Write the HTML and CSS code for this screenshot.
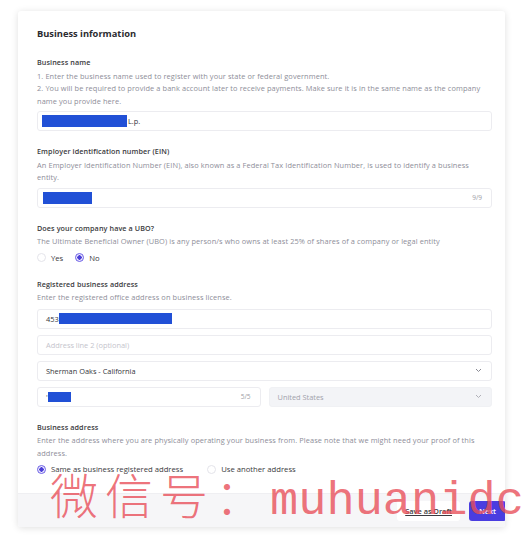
FILE: index.html
```html
<!DOCTYPE html>
<html>
  <head>
    <meta name="viewport" content="width=device-width, initial-scale=1">
    <link rel="stylesheet" href="styles.css">
  </head>

  <body>
    <div class="page">
      <div class="card">
        <div class="card-body">
          <h2 class="title">Business information</h2>

          <div class="field">
            <div class="label">Business name</div>
            <div class="hint">1. Enter the business name used to register with your state or federal government.</div>
            <div class="hint">2. You will be required to provide a bank account later to receive payments. Make sure it is in the same name as the company name you provide here.</div>
            <div class="input"><span class="redact redact-name"></span>L.p.</div>
          </div>

          <div class="field">
            <div class="label">Employer identification number (EIN)</div>
            <div class="hint">An Employer Identification Number (EIN), also known as a Federal Tax Identification Number, is used to identify a business entity.</div>
            <div class="input"><span class="redact redact-ein"></span><span class="count">9/9</span></div>
          </div>

          <div class="field">
            <div class="label">Does your company have a UBO?</div>
            <div class="hint">The Ultimate Beneficial Owner (UBO) is any person/s who owns at least 25% of shares of a company or legal entity</div>
            <div class="radios">
              <label class="radio"><span class="dot"></span>Yes</label>
              <label class="radio checked"><span class="dot"></span>No</label>
            </div>
          </div>

          <div class="field">
            <div class="label">Registered business address</div>
            <div class="hint">Enter the registered office address on business license.</div>
            <div class="stack">
              <div class="input">453<span class="redact redact-street"></span></div>
              <div class="input placeholder">Address line 2 (optional)</div>
              <div class="input select">Sherman Oaks - California
                <svg class="chev" width="7" height="5" viewBox="0 0 7 5"><path d="M1 1l2.5 2.5L6 1" fill="none" stroke="#8a8a94" stroke-width="1"/></svg>
              </div>
              <div class="row">
                <div class="input"><span class="tick">'</span><span class="redact redact-zip"></span><span class="count">5/5</span></div>
                <div class="input select disabled">United States
                  <svg class="chev" width="7" height="5" viewBox="0 0 7 5"><path d="M1 1l2.5 2.5L6 1" fill="none" stroke="#b0b0b8" stroke-width="1"/></svg>
                </div>
              </div>
            </div>
          </div>

          <div class="field last">
            <div class="label">Business address</div>
            <div class="hint">Enter the address where you are physically operating your business from. Please note that we might need your proof of this address.</div>
            <div class="radios">
              <label class="radio checked"><span class="dot"></span>Same as business registered address</label>
              <label class="radio wide"><span class="dot"></span>Use another address</label>
            </div>
          </div>
        </div>

        <div class="card-footer">
          <button class="btn-draft">Save as Draft</button>
          <button class="btn-next">Next</button>
        </div>
      </div>
    </div>

    <div class="watermark"><span class="wm-cjk">微信号：</span><span class="wm-latin">muhuanidc</span></div>
  </body>
</html>
```

FILE: styles.css
```css
body {
  margin: 0;
  background: #fff;
  font-family: "Open Sans", Lato, Arial, sans-serif;
  overflow: hidden;
  position: relative;
  height: 536px;
}

.page {
  padding: 11px 19px 10px 18px;
}

/* card */
.card {
  background: #fff;
  border-radius: 3px;
  box-shadow: 0 1px 7px rgba(0, 0, 0, 0.13);
  overflow: hidden;
}

.card-body {
  padding: 16px 13px 18px 19px;
}

.title {
  margin: 0 0 15px;
  font-size: 9.3px;
  line-height: 14px;
  font-weight: 700;
  color: #2b2b2f;
}

.field {
  margin-bottom: 14px;
}

.field.last {
  margin-bottom: 0;
}

.label {
  font-size: 7.2px;
  line-height: 12px;
  font-weight: 600;
  letter-spacing: 0.1px;
  color: #3a3a40;
  margin-bottom: 1.5px;
}

.hint {
  font-size: 7.4px;
  line-height: 12.5px;
  letter-spacing: 0.1px;
  color: #8e8e99;
}

/* inputs */
.input {
  position: relative;
  display: flex;
  align-items: center;
  height: 20px;
  margin-top: 4px;
  padding: 0 8px;
  border: 1px solid #ececf0;
  border-radius: 3px;
  box-sizing: border-box;
  font-size: 7.4px;
  color: #35353b;
}

.stack {
  display: flex;
  flex-direction: column;
  gap: 6px;
  margin-top: 5px;
}

.stack .input {
  margin-top: 0;
}

.placeholder {
  color: #c4c4cc;
}

.select .chev {
  margin-left: auto;
  margin-right: 1px;
}

.disabled {
  background: #f3f4f7;
  border-color: #f0f1f4;
  color: #a2a2ac;
}

.row {
  display: grid;
  grid-template-columns: 1fr 1fr;
  gap: 8px;
}

.count {
  margin-left: auto;
  margin-right: 1px;
  font-size: 6.5px;
  color: #9c9ca6;
}

.tick {
  color: #555;
}

.redact {
  display: inline-block;
  background: #2150d6;
}

.redact-name {
  width: 85px;
  height: 12px;
  margin-left: -4px;
  margin-right: 1px;
}

.redact-ein {
  width: 49px;
  height: 12px;
  margin-left: -3px;
}

.redact-street {
  width: 113px;
  height: 11px;
}

.redact-zip {
  width: 23px;
  height: 10px;
}

/* radios */
.radios {
  display: flex;
  gap: 12px;
  margin-top: 4px;
  height: 12px;
  align-items: center;
}

.radio {
  display: flex;
  align-items: center;
  gap: 5px;
  font-size: 7.7px;
  color: #3a3a40;
}

.radio.wide {
  margin-left: 12px;
}

.dot {
  width: 9px;
  height: 9px;
  border: 1px solid #e4e4ea;
  border-radius: 50%;
  box-sizing: border-box;
  background: #fff;
}

.radio.checked .dot {
  border-color: #6a5de6;
  background: radial-gradient(circle, #4b3ed8 0 2px, #eeecfc 2.4px);
}

/* footer */
.card-footer {
  display: flex;
  justify-content: flex-end;
  align-items: center;
  gap: 9px;
  height: 34px;
  background: #f6f6f8;
  border-top: 1px solid #efeff2;
  box-sizing: border-box;
}

.card-footer button {
  height: 20px;
  border: none;
  border-radius: 3px;
  font-family: inherit;
  font-size: 7.4px;
  font-weight: 600;
  cursor: pointer;
}

.btn-draft {
  padding: 0 8px;
  background: #fff;
  color: #3a3a40;
  text-decoration: underline;
}

.btn-next {
  width: 37px;
  background: #4a3de0;
  color: #fff;
  margin-right: -1px;
}

/* watermark overlay */
.watermark {
  position: absolute;
  left: 50px;
  top: 463px;
  white-space: nowrap;
  color: rgba(232, 78, 88, 0.8);
  pointer-events: none;
  line-height: 60px;
}

.wm-cjk {
  font-family: "Noto Sans CJK SC", sans-serif;
  font-weight: 300;
  font-size: 48px;
  letter-spacing: 7px;
}

.wm-latin {
  font-family: "Liberation Mono", monospace;
  font-size: 47px;
}
```
